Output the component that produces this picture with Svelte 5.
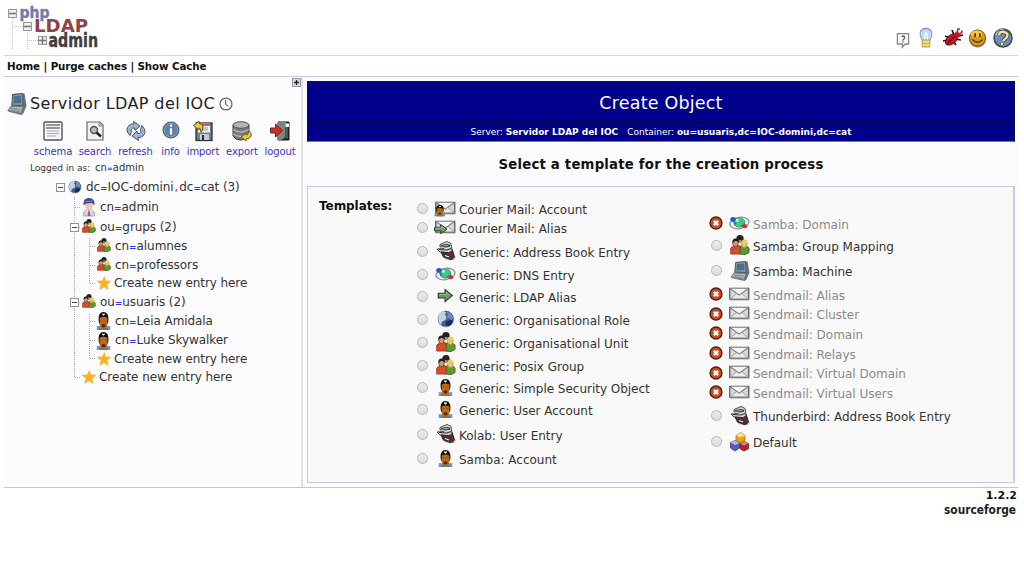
<script>
  const left = [
    ['mailuser', 'Courier Mail: Account', 20],
    ['mailalias', 'Courier Mail: Alias', 19],
    ['book', 'Generic: Address Book Entry', 28],
    ['dns', 'Generic: DNS Entry', 18],
    ['arrow', 'Generic: LDAP Alias', 26],
    ['globe', 'Generic: Organisational Role', 20],
    ['group', 'Generic: Organisational Unit', 26],
    ['group', 'Generic: Posix Group', 20],
    ['user', 'Generic: Simple Security Object', 25],
    ['user', 'Generic: User Account', 19],
    ['book', 'Kolab: User Entry', 30],
    ['user', 'Samba: Account', 19]
  ];
  const right = [
    ['dns', 'Samba: Domain', 22, true],
    ['group', 'Samba: Group Mapping', 22],
    ['computer', 'Samba: Machine', 29],
    ['mail', 'Sendmail: Alias', 18, true],
    ['mail', 'Sendmail: Cluster', 21, true],
    ['mail', 'Sendmail: Domain', 18, true],
    ['mail', 'Sendmail: Relays', 22, true],
    ['mail', 'Sendmail: Virtual Domain', 17, true],
    ['mail', 'Sendmail: Virtual Users', 22, true],
    ['book', 'Thunderbird: Address Book Entry', 25],
    ['cubes', 'Default', 27]
  ];
  const tree = [
    { lv: 0, icon: 'globe', parts: ['dc', 'IOC-domini', 'dc', 'cat'], n: 3, h: 20, open: true },
    { lv: 1, icon: 'admin', parts: ['cn', 'admin'], h: 20 },
    { lv: 1, icon: 'group', parts: ['ou', 'grups'], n: 2, h: 21, open: true },
    { lv: 2, icon: 'group', parts: ['cn', 'alumnes'], h: 17 },
    { lv: 2, icon: 'group', parts: ['cn', 'professors'], h: 21 },
    { lv: 2, icon: 'star', text: 'Create new entry here', h: 14, last: true },
    { lv: 1, icon: 'group', parts: ['ou', 'usuaris'], n: 2, h: 24, open: true },
    { lv: 2, icon: 'user', parts: ['cn', 'Leia Amidala'], h: 14 },
    { lv: 2, icon: 'user', parts: ['cn', 'Luke Skywalker'], h: 25 },
    { lv: 2, icon: 'star', text: 'Create new entry here', h: 11, last: true },
    { lv: 1, icon: 'star', text: 'Create new entry here', h: 26, last: true }
  ];
  const tools = [
    ['schema', 44], ['search', 36], ['refresh', 41], ['info', 25], ['import', 36], ['export', 38], ['logout', 34]
  ];
  const top = ['forum', 'bulb', 'bug', 'smile', 'help'];
</script>

{#snippet mailShape()}
  <rect x="1" y="3.5" width="18.5" height="13.8" fill="#8a8a8a" opacity=".5" />
  <rect x=".7" y="2.7" width="18" height="13" fill="#d9d9d9" stroke="#6c6c6c" stroke-width="1.4" />
  <path d="M1.5 15L7.5 8.5h4.500L18 15z" fill="#ececec" stroke="#a8a8a8" />
  <path d="M1.3 3.3L9.7 10.800L18 3.3" fill="#f6f6f6" stroke="#7d7d7d" stroke-width="1.2" />
{/snippet}
{#snippet arrowShape()}
  <path d="M1.500 6.500h8V2L18 9.500 9.500 17v-4.500h-8z" fill="#6d9b60" stroke="#26332a" stroke-width="1.300" />
  <path d="M3 8h8V5l4 4" fill="none" stroke="#a6c79a" />
{/snippet}
{#snippet userShape()}
  <path d="M1 20v-4.500h18V20z" fill="#7d97b3" />
  <path d="M4 20v-2.500h12V20z" fill="#5f7b9b" />
  <path d="M3.500 10Q2.500 0 10 0t6.500 10l-1 3h-11z" fill="#120d0b" />
  <path d="M4.800 6.500Q10 4 15.200 6.500V14q-1.500 5-5.200 5t-5.200-5z" fill="#bd6812" />
  <path d="M7.500 14q2.500-1.500 5 0v2q-2.500 2-5 0z" fill="#4c2c12" />
  <path d="M6.500 9h2M11.500 9h2" stroke="#7a430f" />
  <path d="M8 2.500h4M10 2.500v1.500" stroke="#fff" stroke-width="1.300" />
{/snippet}

{#snippet icon(name, w, h)}
  <svg class="icon" width={w} height={h ?? w} viewBox="0 0 20 20" preserveAspectRatio="none">
    {#if name === 'mail'}
      {@render mailShape()}
    {:else if name === 'mailuser'}
      {@render mailShape()}
      <g transform="translate(-1 6) scale(.56 .66)">{@render userShape()}</g>
    {:else if name === 'mailalias'}
      {@render mailShape()}
      <g transform="translate(-1.500 5) scale(.72)">{@render arrowShape()}</g>
    {:else if name === 'arrow'}
      {@render arrowShape()}
    {:else if name === 'user'}
      {@render userShape()}
    {:else if name === 'book'}
      <ellipse cx="14" cy="17" rx="6" ry="2.500" fill="#ccc" />
      <path d="M5 11l11-3 2.500 8-4 2.500-7-2.500z" fill="#6c2531" stroke="#291e20" />
      <path d="M6 13l8 1 4 4-3 1-8-3z" fill="#3c3436" />
      <path d="M4 3.500L11 .5l4 2 1 7-3 2-9-.5-3-3 7-.5 2-2-6 .5z" fill="#d8dad9" stroke="#4a4a4a" />
      <path d="M5 4.500l6-1 3 1M10 6l4-1M3 8.500l8 .5 4-1.500M5 11l8 1" stroke="#2c2c2c" fill="none" stroke-width="1.200" />
      <path d="M9 14.500l4 1.500" stroke="#eee" stroke-width="1.300" />
    {:else if name === 'dns'}
      <ellipse cx="10" cy="10" rx="9.200" ry="6.200" fill="#f2f2f2" stroke="#8f8f8f" stroke-width="1.300" transform="rotate(-14 10 10)" />
      <circle cx="9.800" cy="9.500" r="5.600" fill="#2383b5" />
      <path d="M7 5l4-1 4 3-1 4-3 2-1 2-4-2 1-3-2-2z" fill="#45c870" />
      <circle cx="7.800" cy="7" r="1.700" fill="#baf5e8" />
      <circle cx="3.800" cy="6" r="2.600" fill="#2355d0" />
      <circle cx="15" cy="13.500" r="2.300" fill="#d32f25" />
    {:else if name === 'globe'}
      <circle cx="10.500" cy="10.700" r="9" fill="#aaa" opacity=".5" />
      <circle cx="9.700" cy="9.800" r="8.900" fill="#3c5d91" />
      <path d="M1.500 7q1-4 6-6l3 2-2 2 2 2-1 4-4 2-1 4q-4-4-3-10z" fill="#c3d3dd" />
      <path d="M11 2q6 1 7 7l-2 2-3-2-3 1 2-4z" fill="#718cb4" />
      <path d="M10 13l5-2 3 1q-1 4-5 6l-3-1z" fill="#1c2d50" />
    {:else if name === 'group'}
      <circle cx="10" cy="3.800" r="3.700" fill="#202522" />
      <path d="M8.500 5h3v3h-3z" fill="#b98b62" />
      <path d="M.8 19v-6l4-3 5 1 1 8z" fill="#dd4a2a" stroke="#a33820" />
      <path d="M10 19l.5-8 4.500-1 4 3v4.500l-4 2z" fill="#5d9a27" stroke="#3e6c20" />
      <ellipse cx="5.500" cy="8" rx="2.800" ry="3.700" fill="#d59a68" stroke="#4d3022" stroke-width=".7" />
      <path d="M2.500 8Q2 3.500 5.500 3.500T9 7L5.500 5.800z" fill="#251b19" />
      <ellipse cx="14.300" cy="9" rx="2.800" ry="3.700" fill="#ebc47c" stroke="#b08b3c" stroke-width=".7" />
      <path d="M11.200 9q0-4.500 3.300-4.500T18 9.500l-3-2.500z" fill="#e8d062" />
    {:else if name === 'computer'}
      <path d="M6 1l11.500-.5 2 11-3 7-2 1.500-13-3 3-6z" fill="#667277" />
      <path d="M5.500 1.500l10-1 .7 11-11.200-.5z" fill="#8a9798" stroke="#4d5c61" />
      <path d="M7 3l7-.500.5 6.500-8 .5z" fill="#456f98" />
      <path d="M4 12l12 .5-2 6-13-2.500z" fill="#b7bcba" stroke="#727d80" />
      <path d="M4 14l10 1M3 15.500l10 1.500" stroke="#7d8689" />
    {:else if name === 'cubes'}
      <path d="M6 14l10-2 4 5-7 3z" fill="#aaa" opacity=".5" />
      <path d="M6 3.500l4.500-3 4.500 3v5l-4.500 3-4.500-3z" fill="#e2a614" stroke="#a87813" stroke-width=".8" />
      <path d="M6 3.500l4.500 2 4.500-2-4.500-3z" fill="#ffe578" />
      <path d="M.5 10.500l4.500-2 4.500 2.500v5L5 19l-4.500-3z" fill="#5060b4" stroke="#394276" stroke-width=".8" />
      <path d="M.5 10.500L5 13l4.500-2L5 8.500z" fill="#afb8ef" />
      <path d="M10 11.500l4-2 4.500 2v5l-4.500 2.500-4-2.500z" fill="#b62128" stroke="#751820" stroke-width=".8" />
      <path d="M10 11.500l4 2 4.500-2-4.500-2z" fill="#ea7d76" />
    {:else if name === 'star'}
      <path d="M10.500 1l2 6 7 .5-5.500 4.500 2 7-6-4-6 4 2-7L.5 7.500l7-.5z" fill="#ffb519" stroke="#f6ab24" />
    {:else if name === 'admin'}
      <path d="M2 20v-4l4-3h8l4 3v4z" fill="#ccd3e4" stroke="#96a0ba" />
      <circle cx="10" cy="7.500" r="5.500" fill="#f1c6ae" />
      <path d="M2 8Q1.500 0 10 0t8 8L14 5.500 6 6z" fill="#3e4990" />
      <path d="M5 4l10-.5" stroke="#8c9cd4" />
      <path d="M7 13.500l3 2 3-2" stroke="#fff" stroke-width="2" fill="none" />
      <path d="M9 14h2l1 6H8z" fill="#d64654" />
    {:else if name === 'schema'}
      <rect x="1" y="1" width="18" height="18" rx="1" fill="#f5f6f8" stroke="#555" stroke-width="1.400" />
      <path d="M3 4h14M3 7h14" stroke="#777" stroke-width="1.300" />
      <path d="M4 10h12M4 12.500h12M4 15h9" stroke="#9da8ba" stroke-width="1.200" />
    {:else if name === 'search'}
      <path d="M2 1h13l3 3v15H2z" fill="#f2f2ed" stroke="#666" stroke-width="1.200" />
      <path d="M14 1v4h4" fill="#bbb" stroke="#888" />
      <circle cx="9" cy="9" r="3.500" fill="#b4bdc1" stroke="#555" stroke-width="1.400" />
      <path d="M11.500 11.500l4.500 4" stroke="#202020" stroke-width="2.500" />
    {:else if name === 'refresh'}
      <path d="M4 14.500Q-1.500 9 3 4.500q2-2 5-1.500l-.5-2.500L14 5 9 9.500 8.500 7Q4 6.500 5.500 11z" fill="#9fb6cd" stroke="#3c536b" />
      <path d="M16 4.500q5.500 6.500 1 10.500-2 2-5 1.500l.5 3L6 15l5-5 .5 2.500q4.500.5 3-4z" fill="#9fb6cd" stroke="#3c536b" />
    {:else if name === 'info'}
      <circle cx="10" cy="10" r="8.700" fill="#5d81ad" stroke="#566272" stroke-width="1.500" />
      <circle cx="10" cy="10" r="7.500" fill="none" stroke="#8aa6c9" />
      <path d="M10 4v2.500M10 8v7" stroke="#fff" stroke-width="2.400" fill="none" />
    {:else if name === 'import'}
      <rect x="3" y="2" width="16" height="17.500" fill="#707f90" stroke="#29313a" stroke-width="1.300" />
      <path d="M5 2.500h12v9H5z" fill="#f2f2f2" />
      <path d="M5 2.500h12V5H5z" fill="#d05c43" />
      <path d="M7 7h8M7 9h8" stroke="#999" />
      <path d="M7 13h9v6H7z" fill="#c5ccd1" />
      <path d="M9 14h2v5H9z" fill="#27323d" />
      <path d="M.5 4.500L6 0v2.500q4 0 4 3.500t-2 5.500q0-5-2-4.500V9z" fill="#eec849" stroke="#685015" />
    {:else if name === 'export'}
      <path d="M1 4v11q2 4 8 4t8-4V4z" fill="#777b7c" stroke="#383b3d" />
      <ellipse cx="9" cy="4" rx="8" ry="3.300" fill="#b0b4b5" stroke="#555" />
      <path d="M1 8.500q8 5 16 0M1 13q8 5 16 0" stroke="#b5b5b5" fill="none" stroke-width="1.300" />
      <path d="M17 9.500q4 4 1 7-2 1.500-4 1.500v2l-5-4 5-4v2q2.500 0 3-4.500z" fill="#edc638" stroke="#725714" />
    {:else if name === 'logout'}
      <path d="M8 1h11v18H8z" fill="#252e2b" stroke="#151b1a" />
      <path d="M8 1h8v15l-5 3H8z" fill="#788680" />
      <path d="M15 3l3-1v16l-3-2z" fill="#495851" />
      <path d="M15.500 2.500h3.500v3.500h-3.500z" fill="#fff" />
      <path d="M.5 7h5V3l7 6.500-7 6.500v-4h-5z" fill="#d32b26" stroke="#752420" />
    {:else if name === 'forum'}
      <path d="M2 2h16v13h-5l-4 4v-4H2z" fill="#f8f8f8" stroke="#888" stroke-width="1.800" />
      <path d="M8 6q3-2 4 0t-2 4v1M10 12v1.500" stroke="#555" fill="none" stroke-width="1.600" />
    {:else if name === 'bulb'}
      <path d="M5 12.500Q1 9 1.500 5.500q1-5 8.500-5t8.500 5q.5 3.500-3.500 7z" fill="#c3d9fa" stroke="#7e96c8" stroke-width="1.300" />
      <path d="M8 12V7l2-2 2 2v5" stroke="#fff" fill="none" stroke-width="1.700" />
      <path d="M4.500 12h11v7h-11z" fill="#f3db77" stroke="#a9924d" />
      <path d="M4.500 15.500h11" stroke="#bda354" />
    {:else if name === 'bug'}
      <path d="M2 8l5 2M4 17l3-5M13 17l-4-5M18 12l-7-1M11 7L9 2M16 8l4-1M0 13l5-1" stroke="#211316" stroke-width="1.700" fill="none" />
      <ellipse cx="8.500" cy="11.500" rx="7" ry="4.300" fill="#d61220" stroke="#681119" transform="rotate(-40 8.500 11.500)" />
      <circle cx="14" cy="7" r="3" fill="#c01722" />
      <path d="M14 5l1-4 2 0M16 7l3-3-.5-1.500" stroke="#c91b2a" fill="none" stroke-width="1.600" />
      <path d="M4 16l8-8" stroke="#49131a" stroke-width="1.200" />
    {:else if name === 'smile'}
      <circle cx="10" cy="11" r="8.800" fill="#555" opacity=".6" />
      <circle cx="10" cy="9.500" r="8.500" fill="#dc9a18" stroke="#6e4b16" />
      <ellipse cx="9" cy="5" rx="6" ry="3.500" fill="#f6c54c" />
      <path d="M7.500 4.500v4M12.500 4.500v4" stroke="#4a2b06" stroke-width="1.700" />
      <path d="M4.500 11q5.500 6 11 0" stroke="#5b3508" stroke-width="1.500" fill="none" />
    {:else if name === 'help'}
      <circle cx="10" cy="10" r="9" fill="#6b91b2" stroke="#39495b" stroke-width="1.500" />
      <path d="M3 7q2-5 8-5" stroke="#b4cbdc" stroke-width="2" fill="none" />
      <path d="M6 7q1-4 5-3 5 1 3 5l-4 4M9 15v2" stroke="#44453d" stroke-width="4" fill="none" />
      <path d="M6 7q1-4 5-3 5 1 3 5l-4 4M9 15v2" stroke="#f4dfa1" stroke-width="2.400" fill="none" />
    {:else if name === 'clock'}
      <circle cx="10" cy="10" r="8.500" fill="#fff" stroke="#686868" stroke-width="1.800" />
      <path d="M9.500 4v6.500l4 3" stroke="#555" stroke-width="1.500" fill="none" />
    {:else if name === 'deny'}
      <circle cx="10" cy="10" r="8.500" fill="#d44a1c" stroke="#47231a" stroke-width="2" />
      <path d="M7 7l6 6M13 7l-6 6" stroke="#fff" stroke-width="3.300" />
    {/if}
  </svg>
{/snippet}

{#snippet options(items)}
  {#each items as [name, label, h, off]}
    <label class="option" class:off style:height="{h}px">
      <span class="mark">
        {#if off}{@render icon('deny', 14)}{:else}<i class="radio"></i>{/if}
      </span>
      <span class="pic">
        {#if name.startsWith('mail')}{@render icon(name, 21, 17)}
        {:else if name === 'dns'}{@render icon(name, 21, 18)}
        {:else if name === 'arrow'}{@render icon(name, 17, 16)}
        {:else if name === 'user'}{@render icon(name, 15, 17)}
        {:else if name === 'globe'}{@render icon(name, 18)}
        {:else}{@render icon(name, 20)}{/if}
      </span>
      <span class="label">{label}</span>
    </label>
  {/each}
{/snippet}

<div class="page">
  <header>
    <svg class="logo" width="96" height="46" viewBox="4 5 96 46">
      <path d="M12.500 18v31M14 26.500h10M27.500 32v17M29 40.500h9" stroke="#c4c4c4" stroke-dasharray="1 1" fill="none" />
      <g fill="#eee" stroke="#999">
        <rect x="8.500" y="9.500" width="8" height="8" /><rect x="23.500" y="22.500" width="8" height="8" /><rect x="38.500" y="36.500" width="8" height="8" />
      </g>
      <path d="M9 13.500h7M24 26.500h7M39 40.500h7M42.500 37v7" stroke="#777" stroke-width="1.400" />
      <text x="19.500" y="18" textLength="30" lengthAdjust="spacingAndGlyphs" font-size="16.500" fill="#7478b0" stroke="#7478b0" stroke-width=".4">php</text>
      <text x="34" y="31.500" textLength="54" lengthAdjust="spacingAndGlyphs" font-size="17.500" fill="#934047">LDAP</text>
      <text x="48.500" y="47" textLength="49.500" lengthAdjust="spacingAndGlyphs" font-size="19" fill="#3f3f42" stroke="#3f3f42" stroke-width=".4">admin</text>
    </svg>
    <div class="top">
      {#each top as name}{@render icon(name, name === 'forum' ? 14 : name === 'bulb' ? 14 : name === 'smile' ? 19 : 20, name === 'forum' ? 16 : name === 'smile' ? 19 : 20)}{/each}
    </div>
  </header>
  <nav>Home | Purge caches | Show Cache</nav>
  <div class="body">
    <aside>
      <div class="expand"><svg width="9" height="9"><rect x=".5" y=".5" width="8" height="8" fill="#d5dce2" stroke="#919aa1" /><path d="M2 4.500h5M4.500 2v5" stroke="#222" stroke-width="1.300" /></svg></div>
      <div class="server">{@render icon('computer', 20, 22)}<span>Servidor LDAP del IOC</span>{@render icon('clock', 14)}</div>
      <div class="tools">
        {#each tools as [name, w]}
          <div class="tool" style:width="{w}px">{@render icon(name, name === 'info' ? 18 : 20)}<span>{name}</span></div>
        {/each}
      </div>
      <div class="logged"><span>Logged in as:</span> <em>cn<b>=</b>admin</em></div>
      <div class="tree">
        {#each tree as r}
          <div class="node" style:height="{r.h}px">
            <svg class="lines" width={r.lv === 2 ? 41 : r.lv === 1 ? 26 : 12} height={r.h}>
              {#if r.lv === 2}
                <path d="M19.500 0V{r.h}M34.500 0V{r.last ? r.h / 2 : r.h}M35 {Math.floor(r.h / 2) + .5}h6" />
              {:else if r.lv === 1}
                <path d="M19.500 0V{r.last ? r.h / 2 : r.h}M20 {Math.floor(r.h / 2) + .5}h7" />
              {/if}
              {#if r.open}
                <rect x={r.lv ? 15.5 : 1.5} y={Math.floor(r.h / 2) - 3.5} width="8" height="8" fill="#fff" stroke="#929292" />
                <path class="minus" d="M{r.lv ? 17 : 3} {Math.floor(r.h / 2) + .5}h5" />
              {/if}
            </svg>
            <span class="pic" class:up={r.icon === 'group'}>{@render icon(r.icon, r.icon === 'user' ? 15 : 14, r.icon === 'admin' || r.icon === 'user' ? 18 : 14)}</span>
            <span class="name" class:new={r.text}>{#if r.text}{r.text}{:else}{r.parts[0]}<b>=</b>{r.parts[1]}{#if r.parts[2]}<u>,</u>{r.parts[2]}<b>=</b>{r.parts[3]}{/if}{#if r.n}{' '}({r.n}){/if}{/if}</span>
          </div>
        {/each}
      </div>
    </aside>
    <main>
      <div class="banner">
        <h1>Create Object</h1>
        <p><span>Server: <b>Servidor LDAP del IOC</b></span><span>Container: <b>ou=usuaris,dc=IOC-domini,dc=cat</b></span></p>
      </div>
      <h2>Select a template for the creation process</h2>
      <section>
        <h3>Templates:</h3>
        <div class="col first">{@render options(left)}</div>
        <div class="col second">{@render options(right)}</div>
      </section>
    </main>
  </div>
  <footer>
    <strong>1.2.2</strong>
    <svg width="74" height="18"><text x="1" y="10.500" textLength="72" lengthAdjust="spacingAndGlyphs" font-size="13" fill="#222">sourceforge</text></svg>
  </footer>
</div>

<style>
  :global(body) { margin: 0; background: #fff; }
  .page { width: 1024px; height: 586px; box-sizing: border-box; padding: 0 6px 0 4px; overflow: hidden; font: 12px/16px "DejaVu Sans", sans-serif; color: #333; }
  .page * { box-sizing: border-box; }
  .icon, .logo { display: block; flex: none; overflow: visible; }
  header { height: 55px; padding-top: 5px; display: flex; justify-content: space-between; }
  header text { font-family: "DejaVu Sans Condensed", "DejaVu Sans", sans-serif; font-weight: bold; }
  .top { display: flex; align-items: center; gap: 6px; padding: 16px 5px 0 0; height: 50px; }
  .top :global(svg:first-child) { margin: 4px 3px 0 0; }
  .top :global(svg:nth-child(2)) { margin-right: 3px; }
  .top :global(svg:nth-child(-n+2)) { position: relative; left: 6px; }
  .top :global(svg:nth-child(3)) { position: relative; left: 1px; }
  .top :global(svg:nth-child(-n+2)) { left: 0; }
  nav { height: 22px; border-top: 1px solid #d6d6ea; border-bottom: 1px solid #c8c8df; padding: 2px 3px; font-size: 10.300px; letter-spacing: -.1px; line-height: 17px; font-weight: bold; color: #111; white-space: nowrap; }
  .body { display: flex; height: 411px; border-bottom: 1px solid #c3c3da; background: #fcfcff; }
  aside { width: 299px; border-right: 2px solid #e0e0ef; flex: none; }
  .expand { height: 11px; padding-left: 288px; display: flex; align-items: flex-start; padding-top: 1px; }
  .server { height: 32px; display: flex; align-items: center; padding-left: 3px; font-size: 16px; letter-spacing: .4px; color: #222; white-space: nowrap; }
  .server span { margin: 0 4px 0 3px; }
  .tools { display: flex; gap: 2px; margin-left: 27px; height: 39px; }
  .tool { display: flex; flex-direction: column; align-items: center; height: 39px; justify-content: space-between; font-size: 10px; letter-spacing: -.1px; line-height: 14px; color: #3b34b6; padding-top: 1px; }
  .logged { height: 18px; padding-left: 26px; font-size: 9px; line-height: 18px; white-space: nowrap; }
  .logged em { font-style: normal; font-size: 10px; margin-left: 2px; }
  .logged b { font-size: 7px; }
  aside b { color: #3030ff; font-weight: bold; font-size: 9px; letter-spacing: 0; }
  aside u { color: #e22; text-decoration: none; margin: 0 1px; }
  .tree { padding-left: 51px; }
  .node { display: flex; align-items: center; white-space: nowrap; }
  .lines { flex: none; display: block; }
  .lines path { fill: none; stroke: #aaa; stroke-dasharray: 1 1; }
  .lines .minus { stroke: #444; stroke-dasharray: none; }
  .node .pic { width: 15px; display: flex; justify-content: center; flex: none; }
  .node .up { margin-top: -3px; }
  .name { margin-left: 4px; letter-spacing: -.08px; }
  .name.new { margin-left: 3px; }
  main { padding: 4px 0 0 4px; width: 712px; }
  .banner { height: 61px; border: 1px solid #111138; border-bottom-color: #807b7b; background: #00008b; color: #fff; text-align: center; }
  h1 { font-weight: normal; font-size: 17.500px; letter-spacing: .2px; line-height: 43px; height: 41px; margin: 0; border-bottom: 1px solid #000040; }
  .banner p { margin: 0; font-size: 9px; line-height: 18px; display: flex; justify-content: center; gap: 9px; }
  h2 { font-size: 13.300px; letter-spacing: .19px; line-height: 20px; margin: 13px 0 11px; text-align: center; color: #111; }
  section { height: 297px; border: 1px solid #c9c9e0; border-right-width: 2px; background: #f9f9f9; display: flex; }
  h3 { margin: 10px 0 0 11px; width: 96px; font-size: 12px; letter-spacing: -.05px; line-height: 18px; color: #111; }
  .col { width: 294px; padding-top: 12.500px; flex: none; }
  .col.second { padding-top: 26.500px; }
  .option { display: flex; align-items: center; white-space: nowrap; }
  .mark { width: 14px; display: flex; justify-content: center; margin-top: -3px; }
  .radio { width: 11px; height: 11px; border: 1px solid #b5b5b5; border-radius: 50%; background: linear-gradient(#ececec, #dcdcdc); }
  .option .pic { width: 21px; margin: -3px 3px 0 6px; display: flex; justify-content: center; }
  .label { letter-spacing: -.02px; }
  .off { color: #8a8a8a; }
  footer { display: flex; flex-direction: column; align-items: flex-end; padding-right: 1px; }
  footer strong { font-size: 11px; line-height: 14px; margin-top: 1px; color: #111; }
  footer text { font-family: "DejaVu Sans", sans-serif; font-weight: bold; }
</style>
